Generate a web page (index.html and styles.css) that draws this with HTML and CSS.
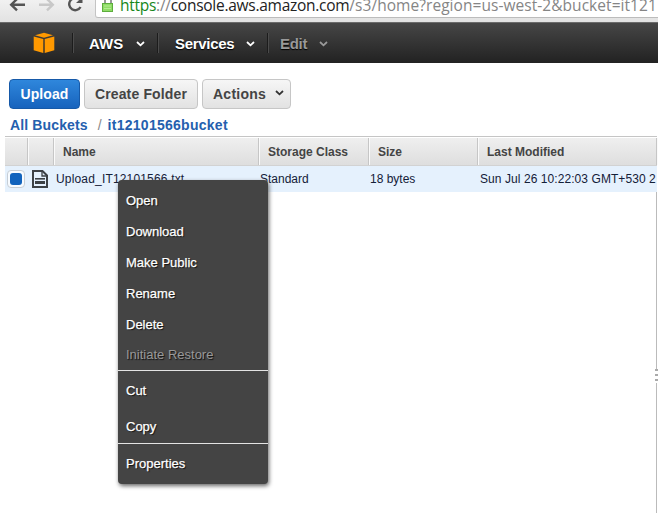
FILE: index.html
```html
<!DOCTYPE html>
<html lang="en">
<head>
<meta charset="utf-8">
<title>S3 Management Console</title>
<link rel="stylesheet" href="styles.css">
</head>
<body>
<div class="browser">
  <svg class="browser-icons" width="95" height="22" viewBox="0 0 95 22" fill="none" stroke-width="2.4">
    <path d="M25 4.7H12M17 -1L11.2 4.7L17 10.3" stroke="#555"/>
    <path d="M39 4.7H52M47 -1L52.8 4.7L47 10.3" stroke="#c8c8c8"/>
    <path d="M79 -.5A6 6 0 1 0 80.5 7" stroke="#555"/>
    <path d="M76 3h6.5v-6z" fill="#555"/>
  </svg>
  <div class="omnibox">
    <svg class="lock" width="12" height="13" viewBox="0 0 12 13"><path d="M3 5V0M9 5V0" stroke="#777" stroke-width="1.5"/><rect x=".5" y="3.5" width="10" height="8" fill="#8fdc66" stroke="#5dad3d"/><path d="M2 6h7M2 8.5h7" stroke="#b3ed90"/></svg>
    <div class="url"><span class="secure">https</span><span class="dim">://</span>console.aws.amazon.com<span class="dim path">/s3/home?region=us-west-2&amp;bucket=it121</span></div>
  </div>
</div>
<nav class="nav">
  <div class="logo"><svg width="22" height="22" viewBox="0 0 22 22" fill="#f90"><path d="M2 3.2L11 .7L20 3.2L11 5.7z"/><path d="M.7 4.5L10.3 7V21L.7 18.2zM21.3 4.5L11.7 7V21L21.3 18.2z"/></svg></div>
  <div class="nav-item aws"><span>AWS</span><svg width="9" height="6" viewBox="0 0 9 6"><path d="M1 1L4.5 4.3L8 1"/></svg></div>
  <div class="nav-item services"><span>Services</span><svg width="9" height="6" viewBox="0 0 9 6"><path d="M1 1L4.5 4.3L8 1"/></svg></div>
  <div class="nav-item edit"><span>Edit</span><svg width="9" height="6" viewBox="0 0 9 6"><path d="M1 1L4.5 4.3L8 1"/></svg></div>
</nav>
<main>
  <div class="toolbar">
    <button class="btn primary">Upload</button>
    <button class="btn create">Create Folder</button>
    <button class="btn actions"><span>Actions</span><svg width="9" height="6" viewBox="0 0 9 6"><path d="M1 1L4.5 4.3L8 1"/></svg></button>
  </div>
  <div class="crumbs"><a class="all">All Buckets</a><i>/</i><a class="bucket">it12101566bucket</a></div>
  <div class="grid">
    <div class="row head"><div></div><div></div><div>Name</div><div class="storage">Storage Class</div><div>Size</div><div>Last Modified</div></div>
    <div class="row file">
      <div class="check"><span></span></div>
      <div class="doc"><svg width="16" height="18" viewBox="0 0 16 18" fill="none" stroke="#3d4145" stroke-width="2"><path d="M1 1H10.5L15 5.5V17H1z"/><path d="M10 1V6H15" stroke-width="1.3"/><path d="M3 8.8H13" stroke-width="1.6"/><path d="M3 12.5H13" stroke-width="3"/></svg></div>
      <div class="filename">Upload_IT12101566.txt</div><div>Standard</div><div>18 bytes</div><div class="date">Sun Jul 26 10:22:03 GMT+530 2</div>
    </div>
    <div class="blank"><span class="handle"></span></div>
  </div>
</main>
<div class="menu">
  <div>Open</div><div>Download</div><div>Make Public</div><div>Rename</div><div>Delete</div><div class="disabled">Initiate Restore</div>
  <hr>
  <div class="cut">Cut</div><div class="copy">Copy</div>
  <hr>
  <div class="props">Properties</div>
</div>
</body>
</html>
```
FILE: styles.css
```css
* { box-sizing: border-box; }
body { margin: 0; width: 658px; height: 513px; overflow: hidden; background: #fff; font-family: "Liberation Sans", Arial, sans-serif; }
svg { display: block; flex: none; }

.browser { height: 22px; display: flex; background: linear-gradient(#f1f1f1, #e2e2e2); overflow: hidden; }
.omnibox { flex: 1; height: 18px; display: flex; background: #fff; border-left: 1px solid #c4c4c4; border-bottom: 1px solid #bcbcbc; border-bottom-left-radius: 3px; overflow: hidden; }
.lock { margin-left: 6px; }
.url { margin: -6px 0 0 6px; font: 15.5px/22px "Open Sans", "Noto Sans", sans-serif; letter-spacing: -.27px; white-space: nowrap; color: #222; }
.secure { color: #16871b; }
.dim { color: #858585; }
.path { letter-spacing: .05px; }

.nav { height: 41px; display: flex; align-items: center; background: linear-gradient(#464646, #222); border-top: 1px solid #6b6b6b; color: #fff; font-size: 15px; font-weight: bold; }
.logo { width: 72px; padding-left: 33px; }
.nav-item { height: 20px; display: flex; align-items: center; justify-content: space-between; border-left: 1px solid #1c1c1c; box-shadow: inset 1px 0 #4b4b4b; padding-left: 16px; text-shadow: 0 1px 1px #000; }
.nav-item svg { fill: none; stroke: #fff; stroke-width: 1.8; margin-top: 2px; }
.aws { width: 85px; padding-right: 12px; }
.services { width: 110px; padding: 0 12px 0 17px; letter-spacing: -.3px; }
.edit { width: 73px; padding: 0 12px; color: #999; letter-spacing: -.3px; }
.nav-item.edit svg { stroke: #999; }

.toolbar { display: flex; gap: 4px; padding: 16px 0 0 9px; }
.btn { height: 30px; padding: 0; border: 1px solid #c6c6c6; border-radius: 4px; background: linear-gradient(#f6f6f6, #e2e2e2); color: #444; font: bold 14px "Liberation Sans", Arial, sans-serif; }
.primary { width: 71px; border-color: #1659a8; background: linear-gradient(#2f87dc, #1763bd); color: #fff; letter-spacing: .1px; }
.create { width: 114px; letter-spacing: .15px; }
.actions { width: 89px; display: flex; align-items: center; justify-content: space-between; padding: 0 6px 0 10px; letter-spacing: .25px; }
.actions svg { fill: none; stroke: #333; stroke-width: 1.8; margin-top: -2px; }

.crumbs { height: 27px; padding: 4px 0 0 10px; display: flex; align-items: center; font-size: 14px; font-weight: bold; color: #2460ae; }
.all { letter-spacing: .13px; }
.bucket { letter-spacing: .27px; }
.crumbs i { margin: 0 6px 0 10px; color: #888; font-style: normal; font-weight: normal; }

.grid { width: 652px; margin-left: 5px; border-top: 1px solid #c5c5c5; padding-top: 1px; font-size: 12px; }
.row { display: grid; grid-template-columns: 23px 26px 205px 110px 109px 179px; align-items: center; white-space: nowrap; }
.head { height: 28px; background: linear-gradient(#efefef, #dedede); border-bottom: 1px solid #d2d2d2; font-weight: bold; color: #444; }
.head > div { height: 27px; line-height: 29px; padding-left: 9px; border-right: 1px solid #c6c6c6; box-shadow: 1px 0 #fafafa; }
.file { height: 26px; background: #e5f1fd; color: #142038; }
.file > div { padding-left: 1px; overflow: hidden; }
.file .filename { padding-left: 2px; letter-spacing: .17px; }
.file .date { padding-left: 2px; letter-spacing: .07px; }
.file .check { width: 18px; height: 18px; margin-left: 2px; padding: 2px; border: 1px solid #c7ced5; border-radius: 4px; background: #f7fbff; }
.check span { display: block; width: 12px; height: 12px; border-radius: 3px; background: #1163bd; }
.file .doc { padding-left: 4px; }
.blank { height: 321px; border-right: 1px solid #bbb; }
.handle { display: block; width: 3px; height: 14px; margin: 177px -2px 0 auto; background: repeating-linear-gradient(#aaa 0 2px, #fff 2px 5px); }
.blank::before { content: ""; display: table; }

.menu { position: absolute; left: 118px; top: 180px; width: 150px; height: 304px; padding-top: 5px; border-radius: 4px; background: #444; box-shadow: 1px 2px 4px #666; color: #fff; font-size: 13px; }
.menu div { height: 31px; line-height: 31px; padding-left: 8px; text-shadow: 1px 1px 1px #111; -webkit-text-stroke: .25px; }
.menu .disabled { height: 30px; line-height: 29px; color: #999; -webkit-text-stroke: 0; }
.menu hr { height: 1px; margin: 0; border: 0; background: #e4e4e4; }
.menu .cut { height: 36px; line-height: 39px; }
.menu .copy { height: 36px; line-height: 39px; }
.menu .props { height: 39px; line-height: 39px; }
```
